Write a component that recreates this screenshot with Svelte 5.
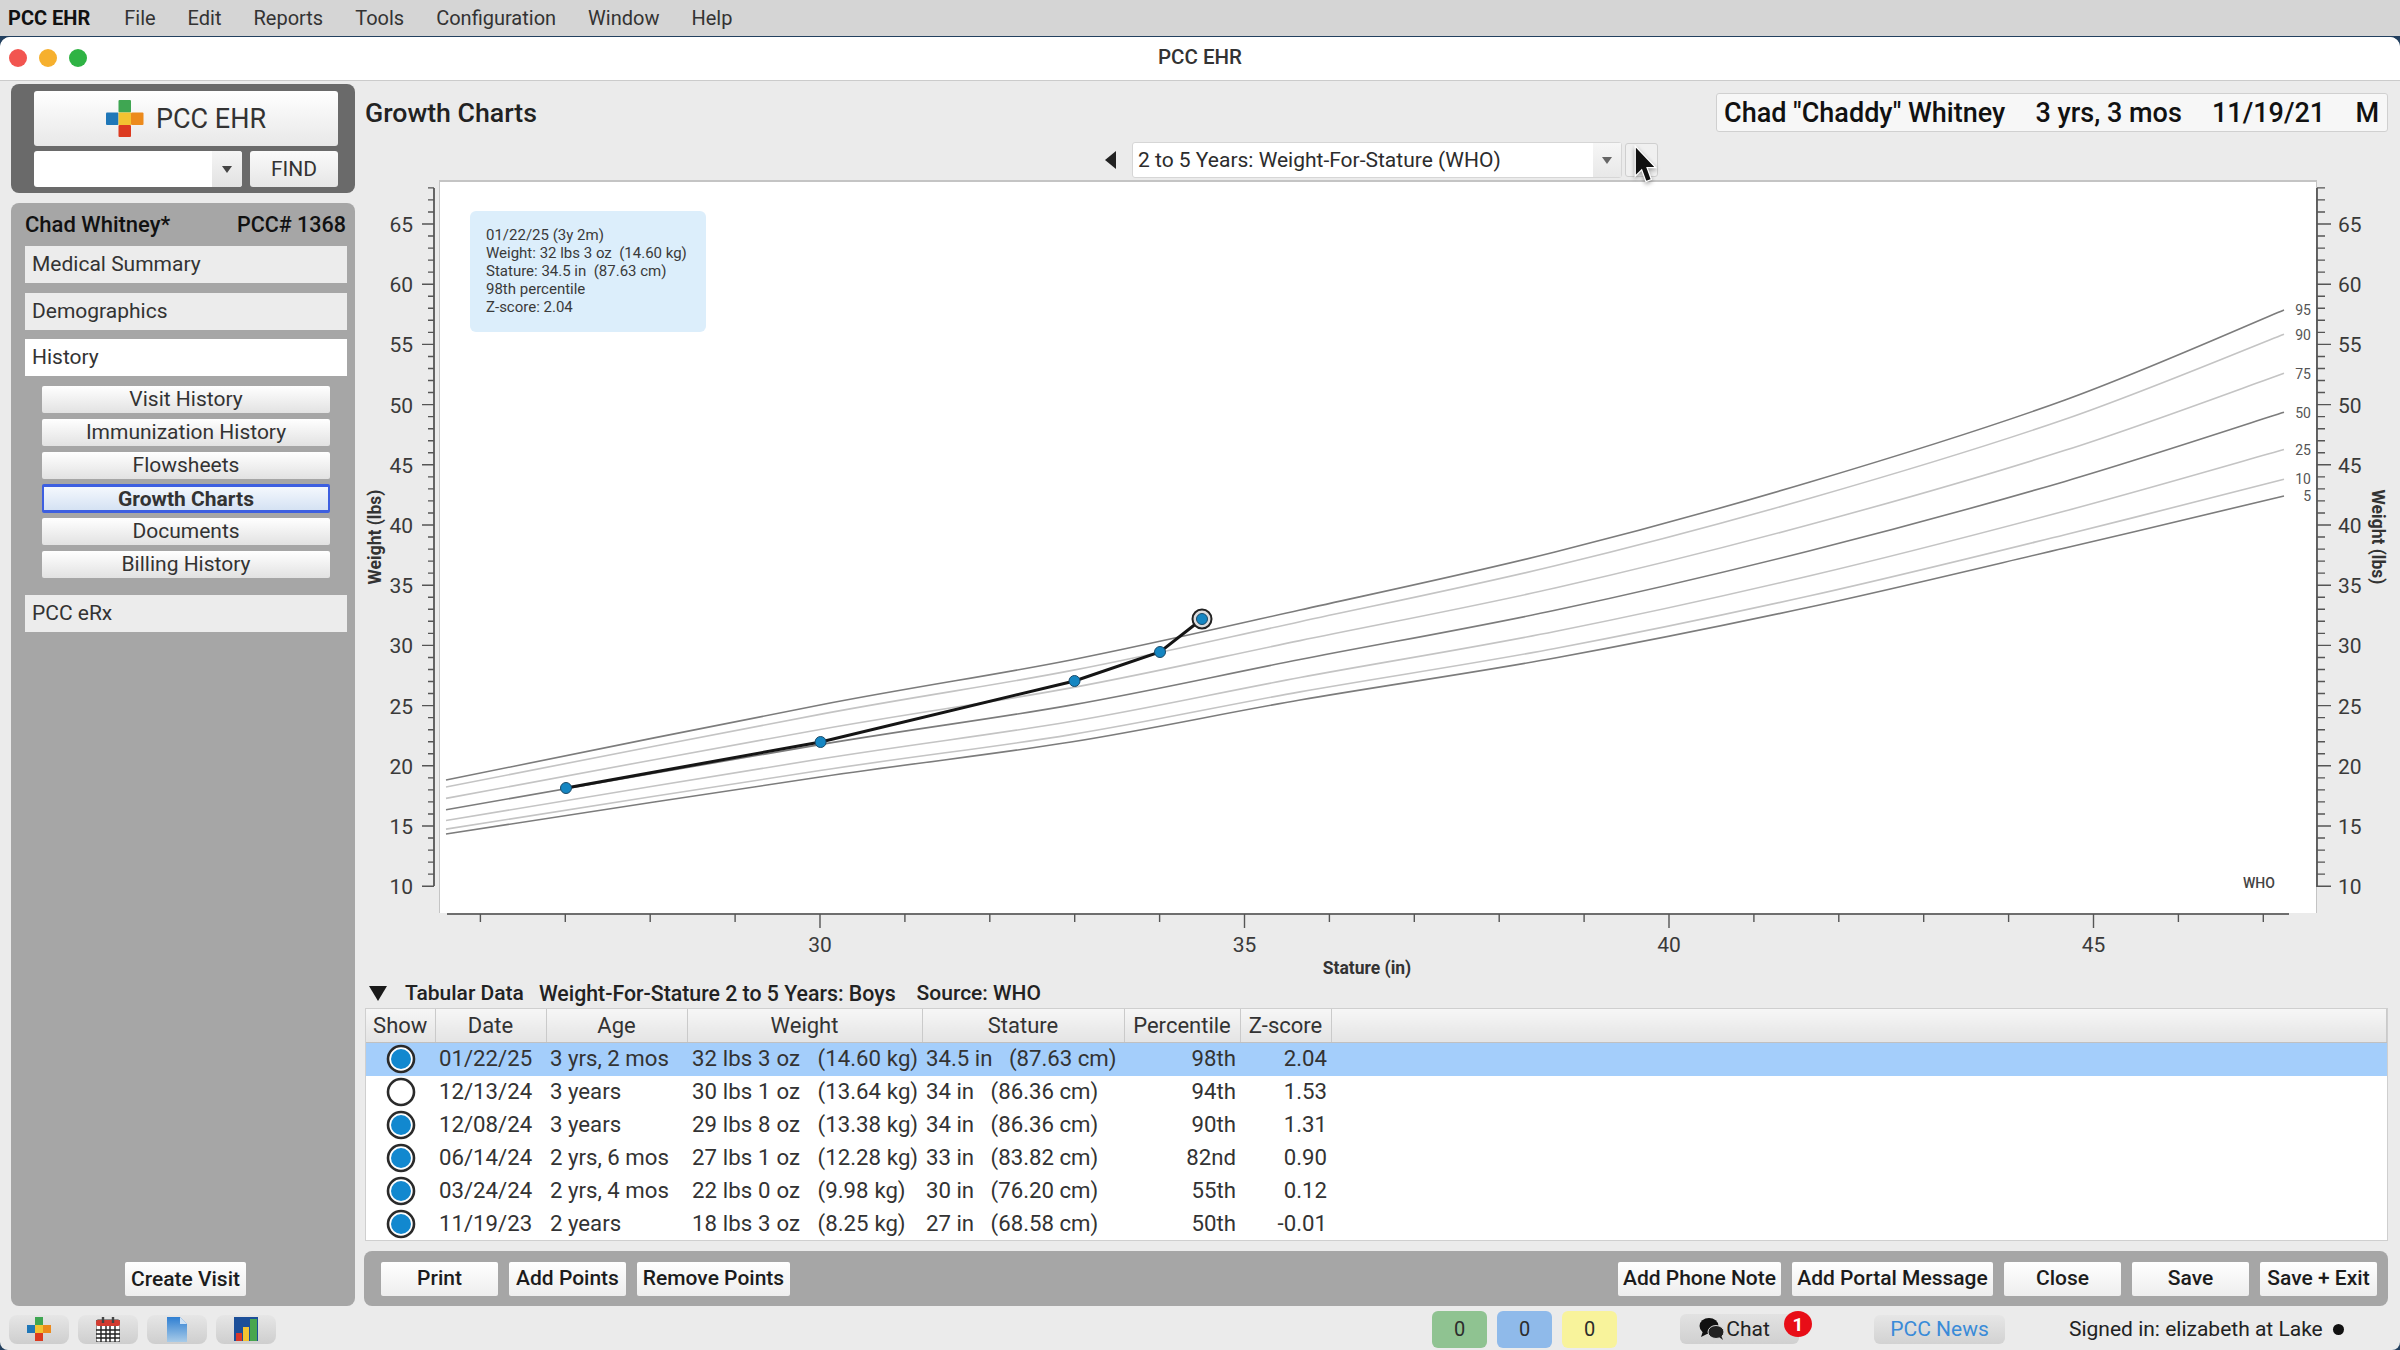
<script>
  const menus = ["File", "Edit", "Reports", "Tools", "Configuration", "Window", "Help"];
  const subNav = ["Visit History", "Immunization History", "Flowsheets", "Growth Charts", "Documents", "Billing History"];

  const rows = [
    { on: true, date: "01/22/25", age: "3 yrs, 2 mos", weight: "32 lbs 3 oz   (14.60 kg)", stature: "34.5 in   (87.63 cm)", pct: "98th", z: "2.04" },
    { on: false, date: "12/13/24", age: "3 years", weight: "30 lbs 1 oz   (13.64 kg)", stature: "34 in   (86.36 cm)", pct: "94th", z: "1.53" },
    { on: true, date: "12/08/24", age: "3 years", weight: "29 lbs 8 oz   (13.38 kg)", stature: "34 in   (86.36 cm)", pct: "90th", z: "1.31" },
    { on: true, date: "06/14/24", age: "2 yrs, 6 mos", weight: "27 lbs 1 oz   (12.28 kg)", stature: "33 in   (83.82 cm)", pct: "82nd", z: "0.90" },
    { on: true, date: "03/24/24", age: "2 yrs, 4 mos", weight: "22 lbs 0 oz   (9.98 kg)", stature: "30 in   (76.20 cm)", pct: "55th", z: "0.12" },
    { on: true, date: "11/19/23", age: "2 years", weight: "18 lbs 3 oz   (8.25 kg)", stature: "27 in   (68.58 cm)", pct: "50th", z: "-0.01" }
  ];

  // chart scales, in page pixels
  const xAt = (inches) => 820 + 84.9 * (inches - 30);
  const yAt = (lbs) => 826 - (lbs - 15) * 12.04;

  const lbsTicks = [];
  for (let w = 10; w <= 68; w++) lbsTicks.push(w);
  const inTicks = [];
  for (let i = 26; i <= 47; i++) inTicks.push(i);

  // upper and lower percentile curves, the rest sit at a fixed share between them
  const xs = [446, 820, 1071, 1300, 1555, 1810, 2065, 2284];
  const top = [780, 705, 660, 610, 552, 482, 400, 310];
  const bottom = [834, 777, 742, 700, 658, 607, 548, 496];
  const curves = [
    { label: "95", share: 0, dark: true, ly: 310 },
    { label: "90", share: 0.13, ly: 335 },
    { label: "75", share: 0.34, ly: 374 },
    { label: "50", share: 0.55, dark: true, ly: 413 },
    { label: "25", share: 0.75, ly: 450 },
    { label: "10", share: 0.91, ly: 479 },
    { label: "5", share: 1, dark: true, ly: 496 }
  ];

  function smooth(pts) {
    let d = `M${pts[0][0]} ${pts[0][1]}`;
    for (let i = 0; i < pts.length - 1; i++) {
      const p0 = pts[Math.max(i - 1, 0)];
      const p1 = pts[i];
      const p2 = pts[i + 1];
      const p3 = pts[Math.min(i + 2, pts.length - 1)];
      const c1 = [p1[0] + (p2[0] - p0[0]) / 6, p1[1] + (p2[1] - p0[1]) / 6];
      const c2 = [p2[0] - (p3[0] - p1[0]) / 6, p2[1] - (p3[1] - p1[1]) / 6];
      d += ` C${c1[0]} ${c1[1]} ${c2[0]} ${c2[1]} ${p2[0]} ${p2[1]}`;
    }
    return d;
  }

  const curvePath = (share) => smooth(xs.map((x, i) => [x, top[i] + (bottom[i] - top[i]) * share]));

  const points = [[566, 788], [820.6, 742], [1074.5, 681], [1160, 652], [1202, 619]];
  const track = points.map((p) => p.join(",")).join(" ");
</script>

<div class="screen">
  <nav class="menubar">
    <strong>PCC EHR</strong>
    {#each menus as m}<span>{m}</span>{/each}
  </nav>

  <div class="window">
    <header class="titlebar">
      <div class="lights"><i class="red"></i><i class="yellow"></i><i class="green"></i></div>
      <span>PCC EHR</span>
    </header>

    <div class="body">
      <aside class="sidebar">
        <div class="search">
          <button class="logo">
            <svg width="38" height="37" viewBox="0 0 38 37">
              <rect x="12.5" y="0" width="12.5" height="12.5" rx="1" fill="#3fa652" />
              <rect x="0" y="12.5" width="12.5" height="12.5" rx="1" fill="#1f77b8" />
              <rect x="12.5" y="12.5" width="12.5" height="12.5" fill="#f3c331" />
              <rect x="25" y="12.5" width="12.5" height="12.5" rx="1" fill="#ec8a1c" />
              <rect x="12.5" y="25" width="12.5" height="12" rx="1" fill="#dc3a20" />
            </svg>
            PCC EHR
          </button>
          <div class="find-row">
            <div class="combo"><span class="combo-field"></span><span class="combo-arrow"></span></div>
            <button class="find">FIND</button>
          </div>
        </div>

        <div class="patient">
          <div class="patient-head"><span class="pname">Chad Whitney*</span><span>PCC# 1368</span></div>
          <div class="section">Medical Summary</div>
          <div class="section">Demographics</div>
          <div class="section open">History</div>
          <div class="subnav">
            {#each subNav as s}
              <button class:current={s === "Growth Charts"}>{s}</button>
            {/each}
          </div>
          <div class="section erx">PCC eRx</div>
          <button class="action create">Create Visit</button>
        </div>
      </aside>

      <main class="main">
        <div class="head">
          <h1>Growth Charts</h1>
          <div class="who-box">
            <span>Chad "Chaddy" Whitney</span><span>3 yrs, 3 mos</span><span>11/19/21</span><span>M</span>
          </div>
        </div>

        <div class="chart-nav">
          <svg class="prev" width="11" height="18" viewBox="0 0 11 18"><polygon points="11,0 11,18 0,9" fill="#222" /></svg>
          <div class="select">
            <span class="select-text">2 to 5 Years: Weight-For-Stature (WHO)</span>
            <span class="select-arrow"></span>
          </div>
          <div class="next">
            <svg class="cursor" width="28" height="41" viewBox="0 0 26 38">
              <path d="M3 1 L3 29 L9 23 L13 34 L18 32 L14 21 L22 21 Z" fill="#111" stroke="#fff" stroke-width="1.2" />
            </svg>
          </div>
        </div>

        <svg class="chart" width="2024" height="800" viewBox="364 178 2024 800">
          <rect x="439" y="180" width="1878" height="733" fill="#c4c4c4" />
          <rect x="440" y="182" width="1876" height="731" fill="#fff" />

          <!-- left and right weight axes -->
          <path d="M434 188 V886 M2317 188 V887" stroke="#444" stroke-width="1.6" fill="none" />
          {#each lbsTicks as w}
            {@const major = w % 5 === 0}
            <path d="M{major ? 422 : 428} {yAt(w)} H434 M2317 {yAt(w)} H{major ? 2331 : 2325}" stroke="#555" stroke-width="1.4" />
            {#if major && w <= 65}
              <text class="num" x="413" y={yAt(w) + 8} text-anchor="end">{w}</text>
              <text class="num" x="2338" y={yAt(w) + 8}>{w}</text>
            {/if}
          {/each}
          <text class="axis" transform="translate(381 537) rotate(-90)" text-anchor="middle">Weight (lbs)</text>
          <text class="axis" transform="translate(2372 537) rotate(90)" text-anchor="middle">Weight (lbs)</text>

          <!-- stature axis -->
          <path d="M447 914 H2289" stroke="#444" stroke-width="1.6" />
          {#each inTicks as i}
            <path d="M{xAt(i)} 914 V{i % 5 === 0 ? 928 : 922}" stroke="#555" stroke-width="1.4" />
            {#if i % 5 === 0}
              <text class="num" x={xAt(i)} y="952" text-anchor="middle">{i}</text>
            {/if}
          {/each}
          <text class="axis" x="1367" y="974" text-anchor="middle">Stature (in)</text>

          {#each curves as c}
            <path d={curvePath(c.share)} fill="none" stroke={c.dark ? "#7c7c7c" : "#c4c4c4"} stroke-width="1.6" />
            <text class="pct" x="2311" y={c.ly + 5} text-anchor="end">{c.label}</text>
          {/each}

          <polyline points={track} fill="none" stroke="#151515" stroke-width="3" />
          {#each points as p, i}
            {#if i === points.length - 1}
              <circle cx={p[0]} cy={p[1]} r="9.5" fill="#ddd" stroke="#222" stroke-width="2" />
            {/if}
            <circle cx={p[0]} cy={p[1]} r="5.5" fill="#1586c2" stroke="#1c4a68" stroke-width="1" />
          {/each}

          <text class="who" x="2243" y="888">WHO</text>

          <rect x="470" y="211" width="236" height="121" rx="6" fill="#dceefb" />
          <text class="tip" x="486"><tspan x="486" y="240">01/22/25 (3y 2m)</tspan><tspan x="486" y="258">Weight: 32 lbs 3 oz  (14.60 kg)</tspan><tspan x="486" y="276">Stature: 34.5 in  (87.63 cm)</tspan><tspan x="486" y="294">98th percentile</tspan><tspan x="486" y="312">Z-score: 2.04</tspan></text>
        </svg>

        <div class="tabular-head">
          <svg width="18" height="15" viewBox="0 0 18 15"><polygon points="0,0 18,0 9,15" fill="#1a1a1a" /></svg>
          <span class="t1">Tabular Data</span>
          <span class="t2">Weight-For-Stature 2 to 5 Years: Boys</span>
          <span class="t3">Source: WHO</span>
        </div>

        <div class="table-wrap">
          <table>
            <colgroup>
              <col style="width:69px" /><col style="width:111px" /><col style="width:141px" /><col style="width:235px" />
              <col style="width:202px" /><col style="width:116px" /><col style="width:91px" /><col />
            </colgroup>
            <thead>
              <tr><th>Show</th><th>Date</th><th>Age</th><th>Weight</th><th>Stature</th><th>Percentile</th><th>Z-score</th><th></th></tr>
            </thead>
            <tbody>
              {#each rows as r, i}
                <tr class:selected={i === 0}>
                  <td class="show">
                    <svg width="30" height="30" viewBox="0 0 30 30">
                      <circle cx="15" cy="15" r="13" fill="#fff" stroke="#2a2a2a" stroke-width="2.6" />
                      {#if r.on}<circle cx="15" cy="15" r="10" fill="#1288cf" />{/if}
                    </svg>
                  </td>
                  <td>{r.date}</td>
                  <td>{r.age}</td>
                  <td class="weight">{r.weight}</td>
                  <td>{r.stature}</td>
                  <td class="right">{r.pct}</td>
                  <td class="right">{r.z}</td>
                  <td></td>
                </tr>
              {/each}
            </tbody>
          </table>
        </div>

        <div class="actions">
          <button class="action print">Print</button>
          <button class="action points">Add Points</button>
          <button class="action remove">Remove Points</button>
          <span class="spacer"></span>
          <button class="action phone">Add Phone Note</button>
          <button class="action portal">Add Portal Message</button>
          <button class="action wide">Close</button>
          <button class="action wide">Save</button>
          <button class="action wide">Save + Exit</button>
        </div>
      </main>
    </div>

    <footer class="footer">
      <div class="tools">
        <button>
          <svg width="24" height="24" viewBox="0 0 24 24">
            <rect x="8" y="0" width="8" height="8" fill="#3fa652" />
            <rect x="0" y="8" width="8" height="8" fill="#1f77b8" />
            <rect x="8" y="8" width="8" height="8" fill="#f3c331" />
            <rect x="16" y="8" width="8" height="8" fill="#ec8a1c" />
            <rect x="8" y="16" width="8" height="8" fill="#dc3a20" />
          </svg>
        </button>
        <button>
          <svg width="24" height="25" viewBox="0 0 24 25">
            <rect x="0" y="3" width="24" height="22" rx="2" fill="#fff" stroke="#333" />
            <rect x="0" y="3" width="24" height="6" rx="2" fill="#d23b30" />
            <path d="M7 0 V6 M17 0 V6" stroke="#444" stroke-width="2.4" />
            <path d="M0 13 H24 M0 17 H24 M0 21 H24 M5 9 V25 M10 9 V25 M14 9 V25 M19 9 V25" stroke="#222" stroke-width="1.4" />
          </svg>
        </button>
        <button>
          <svg width="20" height="25" viewBox="0 0 20 25">
            <defs>
              <linearGradient id="docfill" x1="0" y1="0" x2="0" y2="1">
                <stop offset="0" stop-color="#2f7fd2" /><stop offset="1" stop-color="#a8cbe8" />
              </linearGradient>
            </defs>
            <path d="M0 0 H13 L20 7 V25 H0 Z" fill="url(#docfill)" />
            <path d="M13 0 V7 H20 Z" fill="#cfe2f5" />
          </svg>
        </button>
        <button>
          <svg width="24" height="24" viewBox="0 0 24 24">
            <rect width="24" height="24" fill="#1c4f99" />
            <rect x="2" y="16" width="6" height="8" fill="#d8372a" />
            <rect x="9" y="10" width="6" height="14" fill="#f3c331" />
            <rect x="16" y="2" width="7" height="22" fill="#48a64f" />
          </svg>
        </button>
      </div>

      <div class="counts">
        <span class="green">0</span><span class="blue">0</span><span class="yellow">0</span>
      </div>

      <button class="chat">
        <svg width="26" height="24" viewBox="0 0 26 24">
          <ellipse cx="10" cy="9" rx="9.5" ry="8" fill="#111" />
          <path d="M4 14 L2 20 L10 16 Z" fill="#111" />
          <ellipse cx="17" cy="15" rx="8" ry="6.5" fill="#222" stroke="#d8d8d8" />
          <path d="M20 20 L24 23 L22 18 Z" fill="#222" />
        </svg>
        Chat
        <span class="alert">1</span>
      </button>
      <button class="news">PCC News</button>
      <div class="signed">Signed in: elizabeth at Lake <i></i></div>
    </footer>
  </div>
</div>

<style>
  :global(body) {
    margin: 0;
    background: #23405f;
  }

  .screen {
    width: 2400px;
    height: 1350px;
    display: flex;
    flex-direction: column;
    font-family: Roboto, "Liberation Sans", sans-serif;
    color: #2c2c2c;
    overflow: hidden;
  }

  button {
    font-family: inherit;
    padding: 0;
    border: none;
    cursor: pointer;
  }

  .menubar {
    height: 36px;
    flex: none;
    display: flex;
    align-items: center;
    padding-left: 8px;
    font-size: 20px;
    background: #d5d5d5;
    color: #333;
  }

  .menubar strong {
    font-weight: 700;
    color: #111;
    margin-right: 34px;
  }

  .menubar span {
    margin-right: 32px;
  }

  .window {
    flex: 1;
    display: flex;
    flex-direction: column;
    min-height: 0;
    background: #ebebeb;
    border-radius: 10px 10px 8px 8px;
    overflow: hidden;
    margin-top: 1px;
  }

  .titlebar {
    height: 44px;
    flex: none;
    display: flex;
    align-items: center;
    justify-content: center;
    position: relative;
    background: #fff;
    border-bottom: 1px solid #cbcbcb;
    font-size: 20.5px;
    font-weight: 500;
    color: #333;
    padding-bottom: 3px;
    box-sizing: border-box;
  }

  .lights {
    position: absolute;
    left: 9px;
    top: 12px;
    display: flex;
    gap: 12px;
  }

  .lights i {
    width: 18px;
    height: 18px;
    border-radius: 50%;
  }

  .lights .red { background: #f25550; }
  .lights .yellow { background: #f6b02e; }
  .lights .green { background: #2fb344; }

  .body {
    flex: 1;
    min-height: 0;
    display: grid;
    grid-template-columns: 344px 2024px;
    gap: 9px;
    padding: 3px 12px 0 11px;
  }

  .sidebar {
    display: flex;
    flex-direction: column;
    gap: 10px;
    min-height: 0;
  }

  .search {
    height: 109px;
    box-sizing: border-box;
    padding: 7px 17px 0 23px;
    background: #6a6a6a;
    border-radius: 8px;
  }

  .logo {
    width: 100%;
    height: 55px;
    display: flex;
    align-items: center;
    justify-content: center;
    gap: 12px;
    font-size: 27px;
    color: #333;
    background: linear-gradient(#fff, #e8e8e8);
    border-radius: 3px;
  }

  .find-row {
    display: flex;
    gap: 8px;
    margin-top: 5px;
  }

  .combo {
    width: 208px;
    height: 36px;
    display: flex;
    border-radius: 3px;
    overflow: hidden;
    background: #fff;
  }

  .combo-field {
    flex: 1;
  }

  .combo-arrow {
    width: 30px;
    position: relative;
    background: linear-gradient(#f5f5f5, #e2e2e2);
  }

  .combo-arrow::after {
    content: "";
    position: absolute;
    left: 10px;
    top: 15px;
    border: 5px solid transparent;
    border-top: 7px solid #444;
    border-bottom: none;
  }

  .find {
    flex: 1;
    font-size: 21px;
    color: #333;
    background: linear-gradient(#fafafa, #e6e6e6);
    border-radius: 3px;
    padding-bottom: 1px;
  }

  .patient {
    flex: 1;
    min-height: 0;
    display: flex;
    flex-direction: column;
    padding: 0 8px 10px 14px;
    background: #a6a6a6;
    border-radius: 8px;
  }

  .patient-head {
    height: 43px;
    flex: none;
    display: flex;
    justify-content: space-between;
    align-items: center;
    font-size: 21.5px;
    font-weight: 500;
    color: #111;
    padding: 0 1px 0 0;
  }

  .pname {
    font-size: 22px;
  }

  .section {
    height: 37px;
    flex: none;
    box-sizing: border-box;
    display: flex;
    align-items: center;
    padding: 0 0 1px 7px;
    margin-bottom: 9.5px;
    font-size: 21px;
    color: #333;
    background: #ececec;
  }

  .section.open {
    background: #fff;
  }

  .section.erx {
    margin-top: 17px;
  }

  .subnav {
    display: flex;
    flex-direction: column;
    gap: 6px;
    margin: 0.5px 17px 0;
  }

  .subnav button {
    height: 27px;
    padding-bottom: 1px;
    font-size: 21px;
    color: #333;
    background: linear-gradient(#fff, #e2e2e2);
    border-radius: 2px;
  }

  .subnav button.current {
    height: 29px;
    margin: -1px 0;
    box-sizing: border-box;
    font-weight: 700;
    border: 3px solid #3d5fe0;
    border-left-width: 2px;
    border-right-width: 2px;
    background: linear-gradient(#f4f8fd, #d5e2f3);
  }

  .action {
    height: 34px;
    padding-bottom: 1px;
    font-size: 21px;
    font-weight: 500;
    color: #1c1c1c;
    background: linear-gradient(#fff, #eee);
    border-radius: 2px;
  }

  .create {
    width: 121px;
    margin: auto 0 0 100px;
  }

  .main {
    display: flex;
    flex-direction: column;
    min-height: 0;
    min-width: 0;
  }

  .head {
    display: flex;
    justify-content: space-between;
    align-items: center;
    padding: 9px 0 0 1px;
  }

  h1 {
    margin: 0;
    font-size: 26.7px;
    font-weight: 500;
    color: #222;
  }

  .who-box {
    width: 672px;
    height: 39px;
    box-sizing: border-box;
    display: flex;
    justify-content: space-between;
    align-items: center;
    padding: 0 8px 0 7px;
    font-size: 27px;
    font-weight: 500;
    color: #111;
    background: #f7f7f7;
    border: 1px solid #d0d0d0;
    border-radius: 3px;
  }

  .chart-nav {
    height: 36px;
    margin-top: 10px;
    padding-left: 11px;
    display: flex;
    justify-content: center;
    align-items: center;
  }

  .prev {
    margin-right: 16px;
  }

  .select {
    width: 490px;
    height: 36px;
    box-sizing: border-box;
    display: flex;
    align-items: center;
    justify-content: space-between;
    padding-left: 5px;
    font-size: 21px;
    background: #fff;
    border: 1px solid #d6d6d6;
    border-radius: 3px;
    position: relative;
  }

  .select-text {
    color: #2c2c2c;
  }

  .select-arrow {
    width: 28px;
    height: 34px;
    position: relative;
    background: linear-gradient(#f6f6f6, #e8e8e8);
  }

  .select-arrow::after {
    content: "";
    position: absolute;
    left: 9px;
    top: 14px;
    border: 5px solid transparent;
    border-top: 7px solid #666;
    border-bottom: none;
  }

  .next {
    width: 33px;
    height: 34px;
    margin-left: 3px;
    box-sizing: border-box;
    background: #f0f0f0;
    border: 1px solid #cfcfcf;
    border-radius: 3px;
    position: relative;
  }

  .cursor {
    position: absolute;
    left: 6px;
    top: 1px;
    filter: drop-shadow(0 2px 2px rgba(0, 0, 0, 0.35));
  }

  .chart {
    display: block;
    flex: none;
  }

  .num {
    font-size: 21px;
    fill: #3a3a3a;
  }

  .axis {
    font-size: 17.5px;
    font-weight: 700;
    fill: #333;
  }

  .pct {
    font-size: 14px;
    fill: #555;
  }

  .who {
    font-size: 14px;
    font-weight: 500;
    fill: #444;
  }

  .tip {
    font-size: 15px;
    fill: #3a3a3a;
    white-space: pre;
  }

  .tabular-head {
    height: 30px;
    flex: none;
    display: flex;
    align-items: center;
    padding-left: 5px;
    font-size: 21px;
    font-weight: 500;
    color: #222;
  }

  .t1 {
    margin-left: 18px;
  }

  .t2 {
    margin-left: 15px;
    font-size: 21.3px;
  }

  .t3 {
    margin-left: 21px;
  }

  .table-wrap {
    height: 233px;
    flex: none;
    box-sizing: border-box;
    margin-left: 1px;
    background: #fff;
    border: 1px solid #cfcfcf;
    overflow: hidden;
  }

  table {
    width: 100%;
    table-layout: fixed;
    border-collapse: collapse;
    font-size: 22.2px;
    color: #333;
  }

  th {
    height: 33px;
    padding: 0;
    font-weight: 400;
    font-size: 22px;
    text-align: center;
    background: linear-gradient(#f6f6f6, #e4e4e4);
    border-right: 1px solid #cacaca;
    border-bottom: 1px solid #c0c0c0;
  }

  td {
    height: 33px;
    padding: 0 0 2px 4px;
    box-sizing: border-box;
    white-space: pre;
    overflow: hidden;
  }

  td.show {
    padding: 0;
    text-align: center;
    line-height: 0;
  }

  td.right {
    text-align: right;
    padding: 0 4px 2px 0;
  }

  td.weight {
    padding-left: 5px;
    word-spacing: 0.4px;
  }

  td.show svg {
    vertical-align: middle;
  }

  tr.selected td {
    background: #a4cefb;
  }

  .actions {
    height: 55px;
    flex: none;
    margin-top: 10px;
    display: flex;
    align-items: center;
    gap: 11px;
    padding: 0 11px 0 17px;
    background: #a6a6a6;
    border-radius: 8px;
  }

  .print { width: 117px; }
  .points { width: 117px; }
  .remove { width: 153px; }
  .phone { width: 163px; }
  .portal { width: 201px; }
  .wide { width: 117px; }

  .spacer {
    flex: 1;
  }

  .footer {
    height: 44px;
    flex: none;
    box-sizing: border-box;
    padding: 2px 0 0 9px;
    display: flex;
    align-items: center;
  }

  .tools {
    display: flex;
    gap: 9px;
  }

  .tools button {
    width: 60px;
    height: 29px;
    display: flex;
    align-items: center;
    justify-content: center;
    background: linear-gradient(#e6e6e6, #cecece);
    border-radius: 8px;
  }

  .counts {
    margin-left: 1156px;
    display: flex;
    gap: 10px;
    font-size: 20px;
  }

  .counts span {
    width: 55px;
    height: 37px;
    display: flex;
    align-items: center;
    justify-content: center;
    border-radius: 6px;
  }

  .counts .green { background: #8fc391; }
  .counts .blue { background: #8fbaea; }
  .counts .yellow { background: #f8f39b; }

  .chat {
    width: 119px;
    height: 30px;
    box-sizing: border-box;
    padding-right: 10px;
    margin-left: 63px;
    display: flex;
    align-items: center;
    justify-content: center;
    gap: 1px;
    font-size: 21px;
    color: #222;
    background: linear-gradient(#e2e2e2, #d0d0d0);
    border-radius: 6px;
    position: relative;
  }

  .alert {
    position: absolute;
    right: -13px;
    top: -3px;
    width: 28px;
    height: 26px;
    border-radius: 50%;
    display: flex;
    align-items: center;
    justify-content: center;
    font-size: 19px;
    font-weight: 700;
    color: #fff;
    background: #e80d17;
  }

  .news {
    width: 131px;
    height: 29px;
    margin-left: 75px;
    font-size: 21px;
    color: #3a8bd8;
    background: linear-gradient(#e6e6e6, #d2d2d2);
    border-radius: 6px;
  }

  .signed {
    margin-left: 64px;
    font-size: 21px;
    display: flex;
    align-items: center;
    gap: 10px;
    color: #222;
  }

  .signed i {
    width: 11px;
    height: 11px;
    border-radius: 50%;
    background: #111;
  }
</style>
